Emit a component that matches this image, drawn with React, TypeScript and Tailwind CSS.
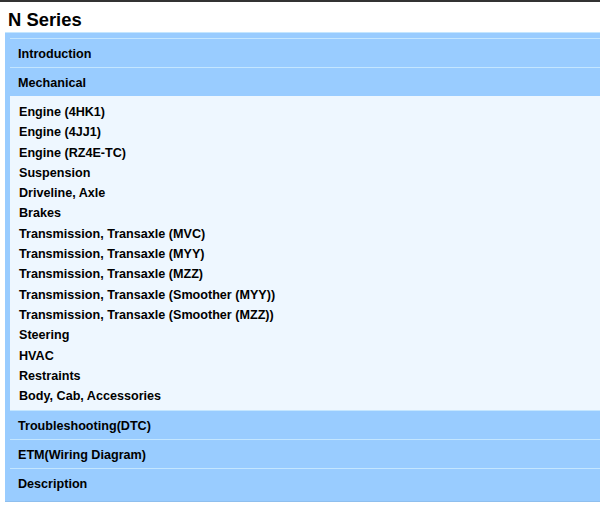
import React from "react";

const items = [
  "Engine (4HK1)",
  "Engine (4JJ1)",
  "Engine (RZ4E-TC)",
  "Suspension",
  "Driveline, Axle",
  "Brakes",
  "Transmission, Transaxle (MVC)",
  "Transmission, Transaxle (MYY)",
  "Transmission, Transaxle (MZZ)",
  "Transmission, Transaxle (Smoother (MYY))",
  "Transmission, Transaxle (Smoother (MZZ))",
  "Steering",
  "HVAC",
  "Restraints",
  "Body, Cab, Accessories",
];

function Header({ label }: { label: string }) {
  return (
    <div className="h-[29px] border-t border-[#c4e6ff] bg-[#99ccff] pl-[8px] pt-[2px] flex items-center text-[12.6px] font-bold text-black">
      {label}
    </div>
  );
}

export default function App() {
  return (
    <div
      className="w-[600px] h-[520px] bg-white border-t-2 border-[#333]"
      style={{ fontFamily: '"Liberation Sans", Arial, sans-serif' }}
    >
      <h1 className="h-[30px] pl-[8px] pt-[7px] text-[18.4px] leading-[22px] font-bold text-black">
        N Series
      </h1>
      <div className="ml-[5px] bg-[#99ccff] border-t border-b border-t-[#c4e6ff] border-b-[#8fbfee] pl-[5px] pt-[5px] pb-[4px]">
        <Header label="Introduction" />
        <Header label="Mechanical" />
        <div className="bg-[#eef7ff] pt-[6px] pb-[4px] pl-[9px]">
          {items.map((t) => (
            <div key={t} className="h-[20.3px] leading-[20.3px] text-[12.6px] font-bold text-black">
              {t}
            </div>
          ))}
        </div>
        <Header label="Troubleshooting(DTC)" />
        <Header label="ETM(Wiring Diagram)" />
        <Header label="Description" />
      </div>
    </div>
  );
}
